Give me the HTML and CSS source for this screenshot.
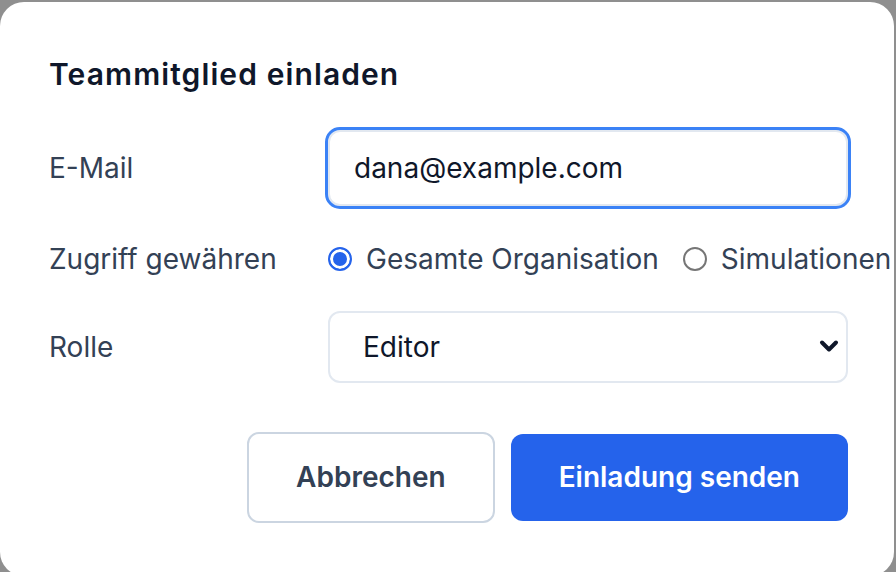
FILE: index.html
```html
<!DOCTYPE html>
<html lang="de">
<head>
<meta charset="utf-8">
<title>Teammitglied einladen</title>
<link rel="stylesheet" href="styles.css">
</head>
<body>
<div class="dialog">
  <h2 class="title">Teammitglied einladen</h2>
  <form class="form">
    <label class="label" for="email">E-Mail</label>
    <div class="field">
      <input class="input" id="email" type="email" value="dana@example.com">
    </div>

    <span class="label">Zugriff gewähren</span>
    <div class="field radios">
      <label class="radio-opt"><input type="radio" name="scope" class="radio" checked> <span>Gesamte Organisation</span></label>
      <label class="radio-opt"><input type="radio" name="scope" class="radio"> <span>Simulationen</span></label>
    </div>

    <label class="label" for="role">Rolle</label>
    <div class="field select-wrap">
      <select class="select" id="role">
        <option>Editor</option>
        <option>Betrachter</option>
        <option>Admin</option>
      </select>
      <svg class="chev" width="20" height="14" viewBox="0 0 20 14" aria-hidden="true"><path d="M3 3.5 L10 10.5 L17 3.5" fill="none" stroke="#0f172a" stroke-width="4" stroke-linecap="round" stroke-linejoin="round"/></svg>
    </div>
  </form>
  <div class="actions">
    <button class="btn btn-secondary" type="button">Abbrechen</button>
    <button class="btn btn-primary" type="button">Einladung senden</button>
  </div>
</div>
</body>
</html>
```

FILE: styles.css
```css
* { box-sizing: border-box; }
html, body { margin: 0; padding: 0; }
body {
  background: #8f8f8f;
  width: 896px;
  height: 572px;
  overflow: hidden;
  font-family: Inter, "Liberation Sans", sans-serif;
}
.dialog {
  margin-top: 2px;
  width: 894px;
  height: 574px;
  background: #ffffff;
  border-radius: 24px;
  padding: 52px 46px 0 49px;
  overflow: hidden;
}
.title {
  margin: 0 0 36px;
  font-size: 30px;
  line-height: 40px;
  font-weight: 600;
  color: #0f172a;
  letter-spacing: 1.1px;
}
.form {
  display: grid;
  grid-template-columns: 279px 520px;
  row-gap: 24px;
  align-items: center;
}
.label {
  font-size: 28px;
  color: #334155;
}
.field { min-width: 0; }
.input {
  display: block;
  width: 100%;
  height: 76px;
  border: 2px solid #e2e8f0;
  border-radius: 12px;
  padding: 0 24px;
  font-family: inherit;
  font-size: 28px;
  color: #0f172a;
  outline: 3px solid #3b82f6;
  outline-offset: 0;
  background: #fff;
}
.radios {
  display: flex;
  align-items: center;
  gap: 24px;
  height: 57px;
  white-space: nowrap;
}
.radio-opt {
  display: flex;
  align-items: center;
  gap: 14px;
  font-size: 28px;
  color: #334155;
  flex: none;
}
.radio {
  appearance: none;
  -webkit-appearance: none;
  margin: 0;
  width: 24px;
  height: 24px;
  border-radius: 50%;
  border: 2px solid #767676;
  background: #fff;
  flex: none;
}
.radio:checked {
  border-color: #2563eb;
  background: #2563eb;
  box-shadow: inset 0 0 0 3px #fff;
}
.select-wrap { position: relative; }
.select {
  appearance: none;
  -webkit-appearance: none;
  display: block;
  width: 100%;
  height: 72px;
  border: 2px solid #e2e8f0;
  border-radius: 12px;
  padding: 0 33px;
  font-family: inherit;
  font-size: 28px;
  color: #0f172a;
  background: #fff;
}
.chev {
  position: absolute;
  right: 9px;
  top: 28px;
  pointer-events: none;
}
.actions {
  display: flex;
  justify-content: flex-end;
  align-items: center;
  gap: 16px;
  margin-top: 49px;
}
.btn {
  font-family: inherit;
  font-size: 28px;
  font-weight: 600;
  line-height: 33px;
  padding: 27px 48px;
  border-radius: 12px;
  cursor: pointer;
}
.btn-secondary {
  background: #fff;
  color: #334155;
  border: 2px solid #cbd5e1;
  padding: 27px 47px;
}
.btn-primary {
  background: #2563eb;
  color: #fff;
  border: none;
}
```
